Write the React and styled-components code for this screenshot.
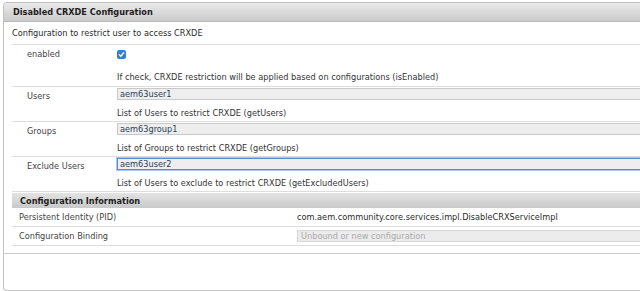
import React from "react";
import styled, { createGlobalStyle } from "styled-components";

const GlobalStyle = createGlobalStyle`
  html, body {
    margin: 0;
    padding: 0;
    background: #ffffff;
    overflow: hidden;
  }
  body {
    font-family: "DejaVu Sans", Verdana, sans-serif;
    font-size: 8.2px;
    color: #333333;
  }
`;

const Page = styled.div`
  padding: 2px 0 0 3px;
`;

const Panel = styled.div`
  height: 287px;
  border: 1px solid #c2c2c2;
  border-right: none;
  border-radius: 4px 0 0 4px;
  display: flex;
  flex-direction: column;
  overflow: hidden;
`;

const TitleBar = styled.div`
  height: 18px;
  display: flex;
  align-items: center;
  padding-left: 9px;
  background: linear-gradient(#e9e9e9, #cbcbcb);
  border-bottom: 1px solid #b9b9b9;
  font-weight: bold;
  color: #1e1e1e;
`;

const Body = styled.div`
  padding-left: 8px;
`;

const Description = styled.div`
  height: 22px;
  line-height: 22px;
  color: #2c2c2c;
`;

const FieldRow = styled.div`
  display: grid;
  grid-template-columns: 105px 1fr;
  border-top: 1px solid #dddddd;
  padding-bottom: ${(p) => (p.$check ? "3px" : "2px")};
  &:last-child {
    border-bottom: 1px solid #dddddd;
  }
`;

const Label = styled.div`
  padding: 3px 0 0 15px;
  line-height: 12px;
  color: #444444;
`;

const Value = styled.div`
  min-width: 0;
  padding-top: ${(p) => (p.$check ? "3px" : "1px")};
`;

const CheckLine = styled.div`
  height: 12px;
  display: flex;
  align-items: center;
`;

const Check = styled.span`
  width: 9px;
  height: 9px;
  border-radius: 2px;
  background: #2f7fe0;
  display: flex;
  align-items: center;
  justify-content: center;
`;

const TextInput = styled.div`
  height: 10px;
  line-height: 10px;
  padding-left: 2px;
  background: #eeeeee;
  border: 1px solid ${(p) => (p.$focused ? "#5b8ad8" : "#c9c9c9")};
  border-right: none;
  box-shadow: ${(p) => (p.$focused ? "0 0 0 1px #a9c5f0" : "none")};
  color: #2b3f55;
  white-space: nowrap;
`;

const Help = styled.div`
  margin-top: ${(p) => (p.$check ? "11px" : "7px")};
  line-height: 12px;
  color: #333333;
  white-space: nowrap;
`;

const SectionHeader = styled.div`
  margin-top: 1px;
  height: 15px;
  display: flex;
  align-items: center;
  padding-left: 8px;
  background: linear-gradient(#e3e3e3, #c9c9c9);
  font-weight: bold;
  color: #1e1e1e;
`;

const InfoRow = styled.div`
  display: grid;
  grid-template-columns: 285px 1fr;
  align-items: center;
  height: 18px;
  border-bottom: 1px solid #dddddd;
`;

const InfoLabel = styled.div`
  padding-left: 7px;
  color: #444444;
`;

const InfoValue = styled.div`
  color: #2c2c2c;
  white-space: nowrap;
  overflow: hidden;
`;

const DisabledInput = styled.div`
  height: 10px;
  line-height: 10px;
  padding-left: 3px;
  background: #ececec;
  border: 1px solid #d6d6d6;
  border-right: none;
  color: #aaaaaa;
  white-space: nowrap;
`;

const Footer = styled.div`
  margin-top: 7px;
  border-top: 1px solid #cfcfcf;
  flex: 1;
`;

const fields = [
  {
    label: "Users",
    value: "aem63user1",
    help: "List of Users to restrict CRXDE (getUsers)",
  },
  {
    label: "Groups",
    value: "aem63group1",
    help: "List of Groups to restrict CRXDE (getGroups)",
  },
  {
    label: "Exclude Users",
    value: "aem63user2",
    help: "List of Users to exclude to restrict CRXDE (getExcludedUsers)",
    focused: true,
  },
];

export default function App() {
  return (
    <Page>
      <GlobalStyle />
      <Panel>
        <TitleBar>Disabled CRXDE Configuration</TitleBar>
        <Body>
          <Description>Configuration to restrict user to access CRXDE</Description>
          <div>
            <FieldRow $check>
              <Label>enabled</Label>
              <Value $check>
                <CheckLine>
                  <Check>
                    <svg width="7" height="7" viewBox="0 0 8 8">
                      <path
                        d="M1.4 4.2 L3.2 6 L6.6 2"
                        fill="none"
                        stroke="#ffffff"
                        strokeWidth="1.4"
                        strokeLinecap="round"
                        strokeLinejoin="round"
                      />
                    </svg>
                  </Check>
                </CheckLine>
                <Help $check>
                  If check, CRXDE restriction will be applied based on configurations (isEnabled)
                </Help>
              </Value>
            </FieldRow>
            {fields.map((f) => (
              <FieldRow key={f.label}>
                <Label>{f.label}</Label>
                <Value>
                  <TextInput $focused={f.focused}>{f.value}</TextInput>
                  <Help>{f.help}</Help>
                </Value>
              </FieldRow>
            ))}
          </div>
          <SectionHeader>Configuration Information</SectionHeader>
          <InfoRow>
            <InfoLabel>Persistent Identity (PID)</InfoLabel>
            <InfoValue>com.aem.community.core.services.impl.DisableCRXServiceImpl</InfoValue>
          </InfoRow>
          <InfoRow>
            <InfoLabel>Configuration Binding</InfoLabel>
            <DisabledInput>Unbound or new configuration</DisabledInput>
          </InfoRow>
        </Body>
        <Footer />
      </Panel>
    </Page>
  );
}
